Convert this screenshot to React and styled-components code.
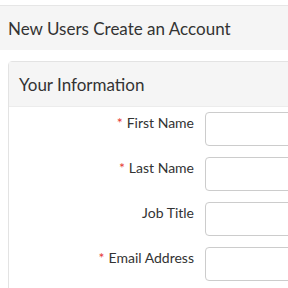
import styled, { createGlobalStyle } from "styled-components";

const Global = createGlobalStyle`
  body {
    margin: 0;
    background: #fff;
    font-family: Lato, "Open Sans", sans-serif;
    color: #333;
  }
`;

const fields = [
  { label: "First Name", required: true },
  { label: "Last Name", required: true },
  { label: "Job Title", required: false },
  { label: "Email Address", required: true },
];

export default function App() {
  return (
    <Page>
      <Global />
      <TitleBar>New Users Create an Account</TitleBar>
      <Panel>
        <PanelHeading>Your Information</PanelHeading>
        <Form>
          {fields.map((f) => (
            <Row key={f.label}>
              <Label>
                {f.required && <Star>*</Star>}
                {f.label}
              </Label>
              <Input type="text" />
            </Row>
          ))}
        </Form>
      </Panel>
    </Page>
  );
}

const Page = styled.div`
  width: 288px;
  height: 288px;
  overflow: hidden;
  padding-top: 5px;
  box-sizing: border-box;
`;

const TitleBar = styled.div`
  height: 45px;
  box-sizing: border-box;
  background: #f5f5f5;
  border-top: 1px solid #e6e6e6;
  padding: 0 8px;
  display: flex;
  align-items: center;
  font-size: 17px;
  color: #333;
`;

const Panel = styled.div`
  margin: 11px 0 0 8px;
  width: 320px;
  border: 1px solid #e3e3e3;
  border-radius: 4px;
  background: #fff;
`;

const PanelHeading = styled.div`
  height: 45px;
  box-sizing: border-box;
  background: #f5f5f5;
  border-bottom: 1px solid #ececec;
  padding: 0 10px;
  display: flex;
  align-items: center;
  font-size: 17px;
  color: #333;
`;

const Form = styled.div`
  display: flex;
  flex-direction: column;
  gap: 11px;
  padding: 5px 0 60px;
`;

const Row = styled.div`
  display: grid;
  grid-template-columns: 185px 1fr;
  column-gap: 11px;
  align-items: start;
`;

const Label = styled.label`
  text-align: right;
  font-size: 14px;
  line-height: 20px;
  padding-top: 1px;
  color: #333;
`;

const Star = styled.span`
  color: #e53935;
  margin-right: 4px;
`;

const Input = styled.input`
  height: 34px;
  box-sizing: border-box;
  border: 1px solid #ccc;
  border-radius: 4px;
  background: #fff;
  width: 100%;
  padding: 6px 12px;
  font: inherit;
`;
